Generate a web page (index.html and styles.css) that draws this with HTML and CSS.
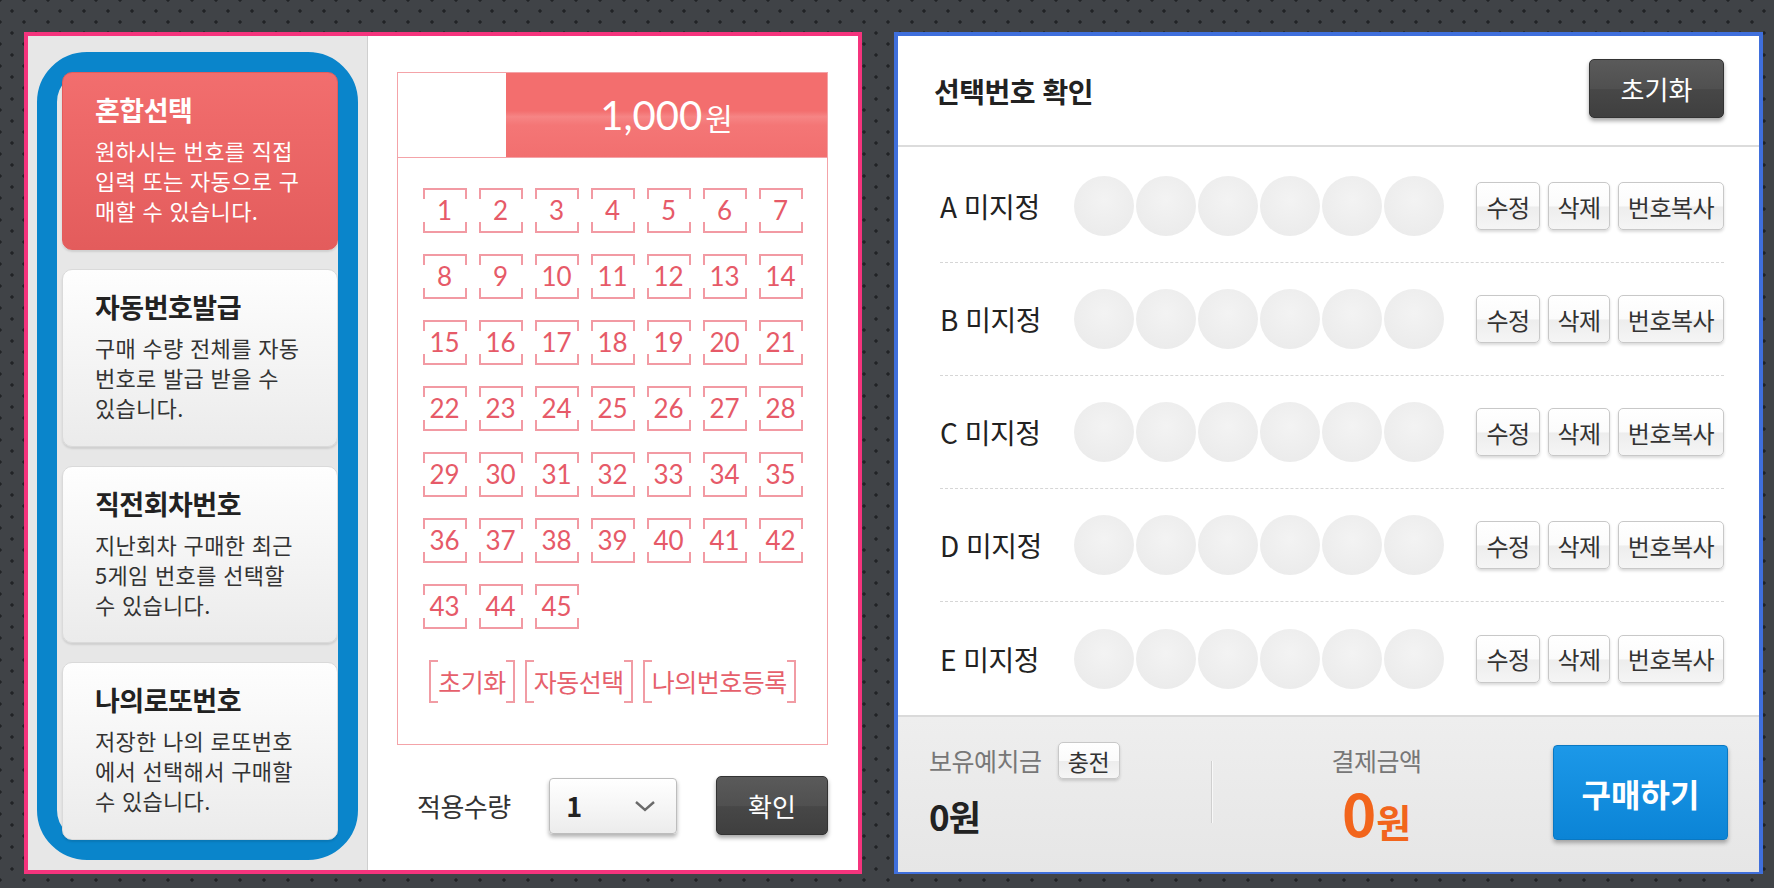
FILE: index.html
```html
<!DOCTYPE html>
<html lang="ko">
<head>
<meta charset="utf-8">
<title>로또 구매</title>
<link rel="stylesheet" href="styles.css">
</head>
<body>
<div class="page">
  <section class="buy-panel">
    <aside class="sidebar">
      <div class="mode-frame">
        <div class="mode-card active">
          <h3 class="mode-title">혼합선택</h3>
          <p class="mode-desc">원하시는 번호를 직접<br>입력 또는 자동으로 구<br>매할 수 있습니다.</p>
        </div>
        <div class="mode-card">
          <h3 class="mode-title">자동번호발급</h3>
          <p class="mode-desc">구매 수량 전체를 자동<br>번호로 발급 받을 수<br>있습니다.</p>
        </div>
        <div class="mode-card">
          <h3 class="mode-title">직전회차번호</h3>
          <p class="mode-desc">지난회차 구매한 최근<br>5게임 번호를 선택할<br>수 있습니다.</p>
        </div>
        <div class="mode-card">
          <h3 class="mode-title">나의로또번호</h3>
          <p class="mode-desc">저장한 나의 로또번호<br>에서 선택해서 구매할<br>수 있습니다.</p>
        </div>
      </div>
    </aside>
    <div class="ticket-area">
      <div class="ticket">
        <div class="ticket-head">
          <div class="ticket-blank"></div>
          <div class="ticket-price"><span class="price-num">1,000</span><span class="price-unit">원</span></div>
        </div>
        <div class="num-grid">
          <span class="num">1</span><span class="num">2</span><span class="num">3</span><span class="num">4</span><span class="num">5</span><span class="num">6</span><span class="num">7</span>
          <span class="num">8</span><span class="num">9</span><span class="num">10</span><span class="num">11</span><span class="num">12</span><span class="num">13</span><span class="num">14</span>
          <span class="num">15</span><span class="num">16</span><span class="num">17</span><span class="num">18</span><span class="num">19</span><span class="num">20</span><span class="num">21</span>
          <span class="num">22</span><span class="num">23</span><span class="num">24</span><span class="num">25</span><span class="num">26</span><span class="num">27</span><span class="num">28</span>
          <span class="num">29</span><span class="num">30</span><span class="num">31</span><span class="num">32</span><span class="num">33</span><span class="num">34</span><span class="num">35</span>
          <span class="num">36</span><span class="num">37</span><span class="num">38</span><span class="num">39</span><span class="num">40</span><span class="num">41</span><span class="num">42</span>
          <span class="num">43</span><span class="num">44</span><span class="num">45</span>
        </div>
        <div class="ticket-actions">
          <button class="bracket-btn">초기화</button>
          <button class="bracket-btn">자동선택</button>
          <button class="bracket-btn">나의번호등록</button>
        </div>
      </div>
      <div class="apply-row">
        <span class="apply-label">적용수량</span>
        <div class="qty-select">
          <span class="qty-value">1</span>
          <svg class="chev" width="22" height="12" viewBox="0 0 22 12"><polyline points="2,2 11,10 20,2" fill="none" stroke="#6a6a6a" stroke-width="2.4"/></svg>
        </div>
        <button class="dark-btn confirm-btn">확인</button>
      </div>
    </div>
  </section>

  <section class="confirm-panel">
    <header class="confirm-head">
      <h2 class="confirm-title">선택번호 확인</h2>
      <button class="dark-btn reset-btn">초기화</button>
    </header>
    <div class="pick-rows">
      <div class="pick-row">
        <span class="pick-label">A 미지정</span>
        <div class="balls"><span class="ball"></span><span class="ball"></span><span class="ball"></span><span class="ball"></span><span class="ball"></span><span class="ball"></span></div>
        <div class="row-btns"><button class="light-btn btn-edit">수정</button><button class="light-btn btn-del">삭제</button><button class="light-btn btn-copy">번호복사</button></div>
      </div>
      <div class="pick-row">
        <span class="pick-label">B 미지정</span>
        <div class="balls"><span class="ball"></span><span class="ball"></span><span class="ball"></span><span class="ball"></span><span class="ball"></span><span class="ball"></span></div>
        <div class="row-btns"><button class="light-btn btn-edit">수정</button><button class="light-btn btn-del">삭제</button><button class="light-btn btn-copy">번호복사</button></div>
      </div>
      <div class="pick-row">
        <span class="pick-label">C 미지정</span>
        <div class="balls"><span class="ball"></span><span class="ball"></span><span class="ball"></span><span class="ball"></span><span class="ball"></span><span class="ball"></span></div>
        <div class="row-btns"><button class="light-btn btn-edit">수정</button><button class="light-btn btn-del">삭제</button><button class="light-btn btn-copy">번호복사</button></div>
      </div>
      <div class="pick-row">
        <span class="pick-label">D 미지정</span>
        <div class="balls"><span class="ball"></span><span class="ball"></span><span class="ball"></span><span class="ball"></span><span class="ball"></span><span class="ball"></span></div>
        <div class="row-btns"><button class="light-btn btn-edit">수정</button><button class="light-btn btn-del">삭제</button><button class="light-btn btn-copy">번호복사</button></div>
      </div>
      <div class="pick-row">
        <span class="pick-label">E 미지정</span>
        <div class="balls"><span class="ball"></span><span class="ball"></span><span class="ball"></span><span class="ball"></span><span class="ball"></span><span class="ball"></span></div>
        <div class="row-btns"><button class="light-btn btn-edit">수정</button><button class="light-btn btn-del">삭제</button><button class="light-btn btn-copy">번호복사</button></div>
      </div>
    </div>
    <footer class="pay-bar">
      <div class="hold">
        <div class="hold-top"><span class="pay-label">보유예치금</span><button class="light-btn charge-btn">충전</button></div>
        <div class="hold-amount">0원</div>
      </div>
      <div class="pay-divider"></div>
      <div class="pay-total">
        <div class="pay-label total-label">결제금액</div>
        <div class="total-amount"><span class="total-num">0</span><span class="total-unit">원</span></div>
      </div>
      <button class="buy-btn">구매하기</button>
    </footer>
  </section>
</div>
</body>
</html>
```

FILE: styles.css
```css
* { box-sizing: border-box; margin: 0; padding: 0; }

html, body { width: 1774px; height: 888px; overflow: hidden; }

body {
  font-family: "Noto Sans CJK KR", "Noto Sans", sans-serif;
  background-color: #404347;
  background-image:
    radial-gradient(circle, #212326 1.3px, rgba(0,0,0,0) 2.1px),
    radial-gradient(circle, #212326 1.3px, rgba(0,0,0,0) 2.1px);
  background-size: 24px 22px;
  background-position: 0 0, 12px 11px;
}

button {
  font-family: inherit;
  border: none;
  background: none;
  cursor: pointer;
}

.page {
  display: flex;
  gap: 32px;
  padding: 32px 0 0 24px;
}

/* ---------- left panel ---------- */
.buy-panel {
  width: 838px;
  height: 842px;
  border: 4px solid #f5347d;
  background: #fff;
  display: flex;
}

.sidebar {
  width: 340px;
  background: #e7e7e7;
  border-right: 1px solid #cfcfcf;
  padding: 16px 9px 10px 9px;
  display: flex;
}

.mode-frame {
  flex: 1;
  border: 20px solid #0a85cb;
  border-radius: 50px;
  padding-left: 5px;
  display: flex;
  flex-direction: column;
  gap: 19px;
}

.mode-card {
  flex: 1;
  border-radius: 10px;
  padding: 20px 0 0 32px;
  background: linear-gradient(#fefefe, #ebebeb);
  border: 1px solid #dadada;
  box-shadow: 0 2px 2px rgba(0,0,0,0.1);
  color: #333;
}

.mode-card.active {
  background: linear-gradient(#f26e6e, #e35c5c);
  border-color: #e35c5c;
  color: #fff;
}

.mode-title {
  font-size: 27px;
  font-weight: 700;
  line-height: 34px;
  color: #222;
  letter-spacing: -0.5px;
}

.mode-card.active .mode-title { color: #fff; }

.mode-desc {
  margin-top: 8px;
  font-size: 22px;
  line-height: 30px;
  white-space: nowrap;
  letter-spacing: 0.3px;
}

.ticket-area {
  flex: 1;
  padding: 36px 30px 0 29px;
}

.ticket {
  border: 1px solid #f4a3a8;
  padding-bottom: 41px;
}

.ticket-head {
  display: flex;
  height: 85px;
  border-bottom: 1px solid #f4a3a8;
}

.ticket-blank { width: 108px; }

.ticket-price {
  flex: 1;
  display: flex;
  align-items: baseline;
  justify-content: center;
  padding-top: 18px;
  color: #fff;
  background: linear-gradient(#f36e6e 0%, #f36e6e 45%, #f68585 52%, #f47676 62%, #f26f6f 100%);
}

.price-num {
  font-family: Lato, "Noto Sans", sans-serif;
  font-size: 40px;
  line-height: 48px;
}

.price-unit {
  font-size: 30px;
  margin-left: 3px;
}

.num-grid {
  margin-top: 30px;
  display: grid;
  grid-template-columns: repeat(7, 44px);
  column-gap: 12px;
  row-gap: 21px;
  justify-content: center;
}

.num {
  height: 45px;
  text-align: center;
  line-height: 45px;
  font-family: Lato, "Noto Sans", sans-serif;
  font-size: 26px;
  color: #e65a68;
  background:
    linear-gradient(#f29aa3, #f29aa3) left top / 100% 2px no-repeat,
    linear-gradient(#f29aa3, #f29aa3) left bottom / 100% 2px no-repeat,
    linear-gradient(#f29aa3, #f29aa3) left top / 2px 11px no-repeat,
    linear-gradient(#f29aa3, #f29aa3) right top / 2px 11px no-repeat,
    linear-gradient(#f29aa3, #f29aa3) left bottom / 2px 11px no-repeat,
    linear-gradient(#f29aa3, #f29aa3) right bottom / 2px 11px no-repeat;
}

.ticket-actions {
  margin-top: 31px;
  display: flex;
  justify-content: center;
  gap: 10px;
}

.bracket-btn {
  height: 43px;
  padding: 0 9px;
  font-size: 25px;
  line-height: 43px;
  letter-spacing: -0.5px;
  color: #e6606c;
  background:
    linear-gradient(#f19ca4, #f19ca4) left top / 2px 100% no-repeat,
    linear-gradient(#f19ca4, #f19ca4) right top / 2px 100% no-repeat,
    linear-gradient(#f19ca4, #f19ca4) left top / 9px 2px no-repeat,
    linear-gradient(#f19ca4, #f19ca4) right top / 9px 2px no-repeat,
    linear-gradient(#f19ca4, #f19ca4) left bottom / 9px 2px no-repeat,
    linear-gradient(#f19ca4, #f19ca4) right bottom / 9px 2px no-repeat;
}

.apply-row {
  margin-top: 31px;
  height: 59px;
  display: flex;
  align-items: center;
  justify-content: space-between;
  padding-left: 20px;
}

.apply-label {
  font-size: 26px;
  color: #333;
  letter-spacing: -0.5px;
}

.qty-select {
  width: 128px;
  height: 56px;
  display: flex;
  align-items: center;
  justify-content: space-between;
  padding: 0 20px 0 16px;
  border: 1px solid #bdbdbd;
  border-radius: 4px;
  background: linear-gradient(#ffffff, #f6f6f6 50%, #ececec);
  box-shadow: 0 3px 4px rgba(0,0,0,0.3);
}

.qty-value {
  font-size: 27px;
  font-weight: 700;
  color: #222;
}

.dark-btn {
  color: #fff;
  font-size: 26px;
  border: 1px solid #333;
  border-radius: 5px;
  background: linear-gradient(#5a5a5a 0%, #505050 50%, #474747 52%, #3f3f3f 100%);
  box-shadow: 0 3px 4px rgba(0,0,0,0.35);
}

.confirm-btn {
  width: 112px;
  height: 59px;
}

/* ---------- right panel ---------- */
.confirm-panel {
  width: 869px;
  height: 842px;
  border: 4px solid #3f6fdc;
  background: #fff;
  display: flex;
  flex-direction: column;
}

.confirm-head {
  height: 111px;
  flex: none;
  border-bottom: 2px solid #dcdcdc;
  display: flex;
  align-items: center;
  justify-content: space-between;
  padding: 0 35px 0 36px;
}

.confirm-title {
  font-size: 28px;
  font-weight: 700;
  color: #222;
  letter-spacing: -0.5px;
}

.reset-btn {
  width: 135px;
  height: 59px;
  margin-top: -4px;
}

.pick-rows {
  flex: 1;
  padding-top: 3px;
}

.pick-row {
  height: 113px;
  margin: 0 35px 0 42px;
  border-bottom: 1px dashed #d6d6d6;
  display: flex;
  align-items: center;
}

.pick-row:last-child { border-bottom: none; }

.pick-label {
  width: 134px;
  font-size: 28px;
  color: #222;
  letter-spacing: -0.5px;
}

.balls {
  display: flex;
  gap: 2px;
}

.ball {
  width: 60px;
  height: 60px;
  border-radius: 50%;
  background: radial-gradient(circle at 50% 40%, #f3f3f3, #e9e9e9);
}

.row-btns {
  margin-left: auto;
  display: flex;
  gap: 8px;
}

.light-btn {
  height: 48px;
  padding: 0;
  font-size: 24px;
  letter-spacing: -0.5px;
  color: #333;
  border: 1px solid #c8c8c8;
  border-radius: 5px;
  background: linear-gradient(#ffffff 0%, #fbfbfb 50%, #ededed 52%, #f5f5f5 100%);
  box-shadow: 0 2px 3px rgba(0,0,0,0.15);
}

.btn-edit { width: 64px; }
.btn-del { width: 62px; }
.btn-copy { width: 106px; }

.pay-bar {
  height: 157px;
  flex: none;
  border-top: 2px solid #dadada;
  background: linear-gradient(#eeeeee, #e6e6e6);
  display: flex;
  align-items: flex-start;
  padding: 0 31px;
}

.hold {
  width: 282px;
  margin-top: 25px;
}

.hold-top {
  display: flex;
  align-items: center;
  gap: 16px;
}

.pay-label {
  font-size: 25px;
  line-height: 37px;
  color: #777;
  letter-spacing: -0.5px;
}

.charge-btn {
  height: 37px;
  width: 62px;
  padding: 0;
  font-size: 23px;
}

.hold-amount {
  margin-top: 17px;
  font-size: 35px;
  font-weight: 700;
  line-height: 40px;
  color: #222;
  letter-spacing: -1px;
}

.pay-divider {
  width: 1px;
  height: 62px;
  margin-top: 44px;
  background: #cfcfcf;
  box-shadow: 1px 0 0 #f8f8f8;
}

.pay-total {
  flex: 1;
  margin-top: 25px;
  padding-right: 12px;
  text-align: center;
}

.total-amount {
  margin-top: 4px;
  line-height: 58px;
  color: #f2651c;
  font-weight: 700;
}

.total-num { font-size: 58px; }
.total-unit { font-size: 38px; }

.buy-btn {
  width: 175px;
  height: 95px;
  margin-top: 28px;
  border: 1px solid #0a78c2;
  border-radius: 4px;
  background: linear-gradient(#1c98e8, #0b84d6);
  box-shadow: 0 3px 4px rgba(0,0,0,0.3);
  color: #fff;
  font-size: 32px;
  font-weight: 700;
}
```
